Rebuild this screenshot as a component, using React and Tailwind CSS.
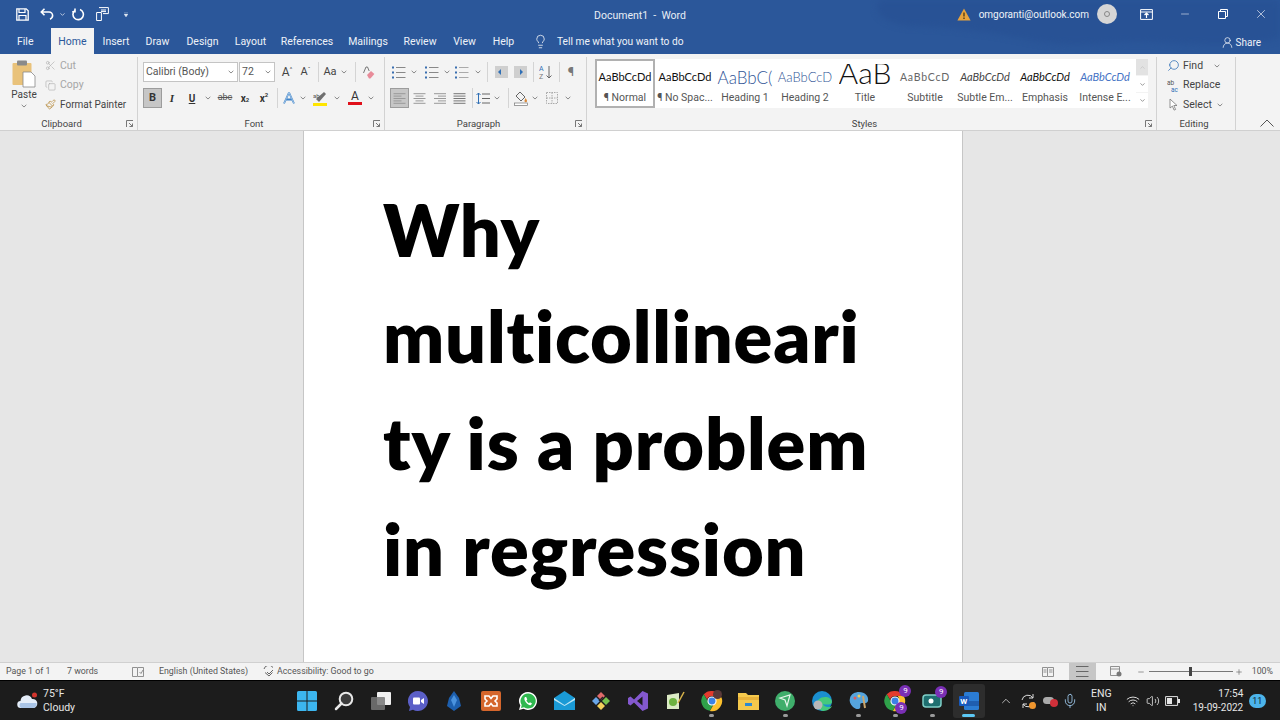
import React from "react";
import { ChevronDown, ChevronUp, Minus, Plus, X, Scissors, Copy, Paintbrush, Lightbulb, UserRound, Search, Mic, Wifi, Volume2 } from "lucide-react";

const tabs = [
  ["Insert", "w-[36px] ml-[4px]"],
  ["Draw", "w-[47px]"],
  ["Design", "w-[43px]"],
  ["Layout", "w-[53px]"],
  ["References", "w-[60px]"],
  ["Mailings", "w-[62px]"],
  ["Review", "w-[42px]"],
  ["View", "w-[47px]"],
  ["Help", "w-[31px]"],
];

const styles = [
  { label: "¶ Normal", text: "AaBbCcDd", cls: "text-[11px] text-[#111]" },
  { label: "¶ No Spac...", text: "AaBbCcDd", cls: "text-[11px] text-[#111]" },
  { label: "Heading 1", text: "AaBbC(", cls: "text-[17px] text-[#2f5496] font-light" },
  { label: "Heading 2", text: "AaBbCcD", cls: "text-[13px] text-[#2f5496] font-light" },
  { label: "Title", text: "AaB", cls: "text-[30px] text-[#111] font-light", clipped: true },
  { label: "Subtitle", text: "AaBbCcD", cls: "text-[10.5px] text-[#666] tracking-[0.8px]" },
  { label: "Subtle Em...", text: "AaBbCcDd", cls: "text-[11px] text-[#444] italic" },
  { label: "Emphasis", text: "AaBbCcDd", cls: "text-[11px] text-[#111] italic" },
  { label: "Intense E...", text: "AaBbCcDd", cls: "text-[11px] text-[#4472c4] italic" },
];

function Chev({ className = "" }) {
  return (
    <svg width="6" height="4" viewBox="0 0 7 4" className={className}>
      <path d="M.8.6l2.7 2.6L6.2.6" fill="none" stroke="#777" strokeWidth="1" />
    </svg>
  );
}

function Cell({ className = "", children }) {
  return <div className={`h-[20px] shrink-0 flex items-center justify-center ${className}`}>{children}</div>;
}

function Divider({ className = "" }) {
  return (
    <div className={`h-[20px] shrink-0 flex justify-center ${className}`}>
      <div className="w-px h-full bg-[#d4d4d4]" />
    </div>
  );
}

function Launcher() {
  return (
    <svg width="8" height="8" viewBox="0 0 8 8" className="absolute right-[3px] top-[63px]">
      <path d="M.5 7V.5H7M3 3l3.5 3.5M6.5 3.5v3h-3" fill="none" stroke="#777" strokeWidth="1" />
    </svg>
  );
}

function Group({ label, className = "", children, launcher = true }) {
  return (
    <section className={`relative h-[73px] mt-[3px] flex flex-col shrink-0 border-r border-[#d2d2d2] ${className}`}>
      <div className="flex-1 min-h-0">{children}</div>
      <div className={`h-[13px] text-center leading-[13px] text-[9.5px] text-[#444] ${launcher ? "pr-[14px]" : "pr-[4px]"}`}>{label}</div>
      {launcher && <Launcher />}
    </section>
  );
}

function Lines({ bullets, color = "#888" }) {
  return (
    <svg width="14" height="13" viewBox="0 0 14 13">
      {[1.5, 6.5, 11.5].map((y) => (
        <g key={y}>
          {bullets && <rect x="0" y={y - 1} width="2" height="2" fill="#3a6fb0" />}
          <path d={`M${bullets ? 4 : 1} ${y}H13.5`} stroke={color} strokeWidth="1" />
        </g>
      ))}
    </svg>
  );
}

function Align({ kind }) {
  const rows = {
    left: [12, 8, 12, 8, 12],
    center: [12, 8, 12, 8, 12],
    right: [12, 8, 12, 8, 12],
    justify: [12, 12, 12, 12, 12],
  }[kind];
  return (
    <svg width="13" height="11" viewBox="0 0 13 11">
      {rows.map((w, i) => {
        const x = kind === "center" ? (13 - w) / 2 : kind === "right" ? 13 - w : 0.5;
        return <path key={i} d={`M${x} ${i * 2.4 + 0.7}h${w}`} stroke={kind === "justify" ? "#777" : "#999"} strokeWidth="1" />;
      })}
    </svg>
  );
}

function TaskIcon({ children, active, dot }) {
  return (
    <div className="relative w-[36.75px] h-[40px] shrink-0 flex items-center justify-center">
      {active && <div className="absolute inset-x-[2px] top-[3px] bottom-[3px] bg-[#2d2d2d] rounded-[3px]" />}
      <div className="relative flex">{children}</div>
      {dot && <div className={`absolute bottom-[4px] h-[3px] rounded-full ${active ? "w-[13px] bg-[#5cc8f5]" : "w-[5px] bg-[#9a9a9a]"}`} />}
    </div>
  );
}

function Badge({ className = "" }) {
  return (
    <div className={`absolute w-[12px] h-[12px] rounded-full bg-[#7a2fb5] text-white text-[8px] leading-[11px] text-center ${className}`}>
      9
    </div>
  );
}

function Chrome({ size = 22 }) {
  return (
    <svg width={size} height={size} viewBox="0 0 24 24">
      <path d="M12 1a11 11 0 0 1 9.5 5.5H12a5.5 5.5 0 0 0-5.3 4L3 4.6A11 11 0 0 1 12 1z" fill="#e33b2e" />
      <path d="M3 4.6l4.7 8.1a5.5 5.5 0 0 0 5.6 3l-3.6 7A11 11 0 0 1 3 4.6z" fill="#2fa14a" />
      <path d="M21.5 6.5a11 11 0 0 1-11.8 16.3l4.8-8.3a5.5 5.5 0 0 0 .3-8z" fill="#fbc02d" />
      <circle cx="12" cy="12" r="4.4" fill="#3b82e6" stroke="#fff" strokeWidth="1.2" />
    </svg>
  );
}

export default function App() {
  return (
    <div className="w-[1280px] h-[720px] overflow-hidden flex flex-col font-['Roboto',sans-serif] text-[10.5px] text-[#444]">
      {/* title bar */}
      <header className="relative h-[54px] shrink-0 bg-[#2b579a] text-white overflow-hidden">
        <svg className="absolute left-[870px] top-0 blur-[3px]" width="410" height="54" viewBox="0 0 410 54">
          <path d="M10 0h400v38c-40 10-90 6-130 4s-70 8-120-2S90 28 40 26C20 25 0 14 10 0z" fill="#285295" />
        </svg>
        <div className="relative h-[28px] flex items-center">
          <div className="w-[15px] ml-[16px] flex">
            <svg width="13" height="13" viewBox="0 0 13 13">
              <path d="M.8.8h9.4l2 2v9.400H.8z" fill="none" stroke="#fff" strokeWidth="1.3" />
              <path d="M3 1v3.500h6V1M3 12V7.500h7V12" fill="none" stroke="#fff" strokeWidth="1.2" />
            </svg>
          </div>
          <svg className="ml-[9px]" width="14" height="12" viewBox="0 0 14 12">
            <path d="M4.500.8L1.300 4l3.200 3.200M1.600 4H9a3.600 3.600 0 0 1 3.600 3.600c0 2-1.200 3-2.600 3.600" fill="none" stroke="#fff" strokeWidth="1.6" />
          </svg>
          <ChevronDown className="ml-[5px] text-[#c8d4e6]" size={7} strokeWidth={3} />
          <svg className="ml-[6px]" width="13" height="13" viewBox="0 0 13 13">
            <path d="M8 1.600a5.200 5.200 0 1 1-4.800.6M3 .5v3.200H.2" fill="none" stroke="#fff" strokeWidth="1.6" />
          </svg>
          <svg className="ml-[11px]" width="13" height="14" viewBox="0 0 13 14">
            <path d="M.6 5.500h4.800v8H.6zM3 .6h9.400v6H7" fill="none" stroke="#fff" strokeWidth="1" />
            <path d="M5 3h5M5 4.600h5" stroke="#fff" strokeWidth="1" />
          </svg>
          <svg className="ml-[15px]" width="4" height="5" viewBox="0 0 5 6">
            <path d="M0 0h5M0 2.500h5L2.500 6z" fill="#dfe6f1" stroke="#dfe6f1" strokeWidth=".5" />
          </svg>
          <div className="flex-1" />
          <div className="absolute left-0 right-0 pt-[3px] text-center text-[10.5px] text-[#e8edf5] pointer-events-none">Document1&nbsp; -&nbsp; Word</div>
          <svg width="14" height="13" viewBox="0 0 14 13">
            <path d="M7 .5l6.600 12H.4z" fill="#e8a33d" />
            <path d="M7 4.500v4M7 9.600v1.400" stroke="#3b2c10" strokeWidth="1.2" />
          </svg>
          <span className="ml-[8px] text-[10px] text-[#eef2f8]">omgoranti@outlook.com</span>
          <div className="ml-[8px] w-[20px] h-[20px] rounded-full bg-[#d6d6d6] flex items-center justify-center">
            <div className="w-[6px] h-[6px] rounded-full border border-[#888]" />
          </div>
          <svg className="ml-[22.5px]" width="13" height="11" viewBox="0 0 13 11">
            <path d="M.6.6h11.800v9.800H.6zM.6 3h11.800" fill="none" stroke="#fff" strokeWidth="1" />
            <path d="M6.500 4v5M4.500 6l2-2 2 2" fill="none" stroke="#fff" strokeWidth="1.2" />
          </svg>
          <Minus className="ml-[26.5px] text-[#e8edf5]" size={12} strokeWidth={1.2} />
          <svg className="ml-[27px]" width="10" height="10" viewBox="0 0 10 10">
            <path d="M.5 2.500h7v7h-7zM2.500 2.500v-2h7v7h-2" fill="none" stroke="#fff" strokeWidth="1" />
          </svg>
          <X className="ml-[26px] mr-[12px] text-[#e8edf5]" size={14} strokeWidth={1.2} />
        </div>
        <nav className="relative h-[26px] flex items-center text-[10.5px] text-[#eef2f8]">
          <span className="ml-[17px] w-[17px] pt-[1px]">File</span>
          <div className="ml-[17px] w-[43px] h-[26px] pt-[2px] bg-[#f3f3f3] text-[#2b579a] flex items-center justify-center">Home</div>
          {tabs.map(([name, cls]) => (
            <span key={name} className={`${cls} pt-[2px] text-center whitespace-nowrap`}>{name}</span>
          ))}
          <Lightbulb className="ml-[14px] text-white" size={15} strokeWidth={1.2} />
          <span className="ml-[9px] pt-[1px] text-[10.2px]">Tell me what you want to do</span>
          <div className="flex-1" />
          <UserRound className="mt-[2px] text-white" size={13} strokeWidth={1.3} />
          <span className="ml-[2px] mr-[19px] pt-[2px] text-[10px]">Share</span>
        </nav>
      </header>

      {/* ribbon */}
      <div className="h-[77px] shrink-0 bg-[#f3f3f3] border-b border-[#d0d0d0] flex">
        <Group label="Clipboard" className="w-[138px]">
          <div className="flex h-full">
            <div className="w-[48px] -mr-[3px] flex flex-col items-center pt-[3px]">
              <svg width="24" height="28" viewBox="0 0 24 28">
                <rect x="0.5" y="3" width="19" height="22" rx="1" fill="#e9c27a" />
                <rect x="5" y="0.5" width="10" height="5" rx="1" fill="#8a8a8a" />
                <path d="M11 12h8l4 4v11H11z" fill="#fff" stroke="#888" strokeWidth=".8" />
              </svg>
              <span className="leading-[12px] mt-px text-[10px]">Paste</span>
              <Chev className="mt-[3px]" />
            </div>
            <div className="flex flex-col gap-[2.500px] text-[10.5px]">
              <div className="h-[17px] flex items-center gap-[4px] text-[#a6a6a6]">
                <Scissors size={11} strokeWidth={1.2} className="w-[11px]" /> Cut
              </div>
              <div className="h-[17px] flex items-center gap-[4px] text-[#a6a6a6]">
                <Copy size={11} strokeWidth={1.2} className="w-[11px]" /> Copy
              </div>
              <div className="h-[17px] flex items-center gap-[4px] whitespace-nowrap text-[10px] text-[#444]">
                <Paintbrush size={11} strokeWidth={1.6} className="w-[11px] text-[#b78a3c]" /> Format Painter
              </div>
            </div>
          </div>
        </Group>

        <Group label="Font" className="w-[247px]">
          <div className="pl-[5px] pt-[5px] flex flex-col gap-[6px]">
            <div className="flex items-center h-[20px]">
              <div className="w-[95px] h-[20px] bg-white border border-[#c4c4c4] flex items-center justify-between pl-[2px] pr-[3px] text-[#555]">
                Calibri (Body) <Chev />
              </div>
              <div className="ml-px w-[36px] h-[20px] bg-white border border-[#c4c4c4] flex items-center justify-between pl-[2px] pr-[3px] text-[#555]">
                72 <Chev />
              </div>
              <Cell className="w-[18px] ml-[3px] text-[12px]">A<sup className="text-[6px]">^</sup></Cell>
              <Cell className="w-[19px] text-[11px]">A<sup className="text-[6px]">ˇ</sup></Cell>
              <Divider className="w-[6px]" />
              <Cell className="w-[18px] text-[11px]">Aa</Cell>
              <Cell className="w-[10px]"><Chev /></Cell>
              <Divider className="w-[12px]" />
              <Cell className="w-[14px]">
                <svg width="13" height="13" viewBox="0 0 13 13">
                  <path d="M1.500 7L4 1h1.500l1.700 4" fill="none" stroke="#777" strokeWidth="1" />
                  <path d="M5 9l4-4 3.400 3-4 4.400H7z" fill="#e88c9a" />
                </svg>
              </Cell>
            </div>
            <div className="flex items-center h-[20px]">
              <Cell className="w-[19px] bg-[#c6c6c6] border border-[#9c9c9c] font-bold text-[11px] text-[#333]">B</Cell>
              <Cell className="w-[20px] italic font-bold text-[11px] font-['Liberation_Serif',serif] text-[#333]">I</Cell>
              <Cell className="w-[20px] underline font-bold text-[10px] text-[#333]">U</Cell>
              <Cell className="w-[12px]"><Chev /></Cell>
              <Cell className="w-[22px] line-through text-[9px] text-[#555]">abc</Cell>
              <Cell className="w-[18px] font-bold text-[10px] text-[#333]">x<sub className="text-[6px]">2</sub></Cell>
              <Cell className="w-[20px] font-bold text-[10px] text-[#333]">x<sup className="text-[6px]">2</sup></Cell>
              <Divider className="w-[6px]" />
              <Cell className="w-[18px]">
                <svg width="14" height="14" viewBox="0 0 14 14">
                  <path d="M7 1.500L2 12.500M7 1.500l5 11M4 8.500h6" fill="none" stroke="#3e83c9" strokeWidth="1.8" />
                  <path d="M7 1.500L2 12.500M7 1.500l5 11" fill="none" stroke="#dcebf8" strokeWidth=".6" />
                </svg>
              </Cell>
              <Cell className="w-[10px]"><Chev /></Cell>
              <Cell className="w-[24px]">
                <svg width="15" height="15" viewBox="0 0 15 15">
                  <path d="M3 8l8-7 2 2-7 8z" fill="#6f6f6f" />
                  <text x="0" y="7" fontSize="6" fill="#555">ab</text>
                  <rect x="0" y="12" width="14" height="3" fill="#ffe500" />
                </svg>
              </Cell>
              <Cell className="w-[10px]"><Chev /></Cell>
              <Cell className="w-[26px]">
                <div className="flex flex-col items-center leading-[11px] text-[12px] text-[#333]">
                  A
                  <div className="w-[14px] h-[3px] bg-[#e0101a]" />
                </div>
              </Cell>
              <Cell className="w-[6px]"><Chev /></Cell>
            </div>
          </div>
        </Group>

        <Group label="Paragraph" className="w-[202px]">
          <div className="pl-[5px] pt-[5px] flex flex-col gap-[6px]">
            <div className="flex items-center h-[20px]">
              <Cell className="w-[18px]"><Lines bullets /></Cell>
              <Cell className="w-[12px]"><Chev /></Cell>
              <Cell className="w-[24px]"><Lines bullets /></Cell>
              <Cell className="w-[6px]"><Chev /></Cell>
              <Cell className="w-[24px]"><Lines bullets color="#aaa" /></Cell>
              <Cell className="w-[8px]"><Chev /></Cell>
              <Divider className="w-[10px]" />
              <Cell className="w-[18px]">
                <svg width="14" height="12" viewBox="0 0 14 12">
                  <rect x="1" y="0" width="13" height="12" fill="#cfcfcf" />
                  <path d="M7 3L4 6l3 3z" fill="#2f6fb5" />
                </svg>
              </Cell>
              <Cell className="w-[22px]">
                <svg width="14" height="12" viewBox="0 0 14 12">
                  <rect x="0" y="0" width="13" height="12" fill="#cfcfcf" />
                  <path d="M6 3l3 3-3 3z" fill="#2f6fb5" />
                </svg>
              </Cell>
              <Divider className="w-[2px]" />
              <Cell className="w-[24px]">
                <svg width="14" height="14" viewBox="0 0 14 14">
                  <text x="0" y="6" fontSize="7" fill="#2f6fb5">A</text>
                  <text x="0" y="13.500" fontSize="7" fill="#777">Z</text>
                  <path d="M10 1v12M7.500 10.500L10 13l2.500-2.500" fill="none" stroke="#666" />
                </svg>
              </Cell>
              <Divider className="w-[2px]" />
              <Cell className="w-[22px] text-[13px] text-[#777]">¶</Cell>
            </div>
            <div className="flex items-center h-[20px]">
              <Cell className="w-[19px] bg-[#c6c6c6] border border-[#9c9c9c]"><Align kind="left" /></Cell>
              <Cell className="w-[20px]"><Align kind="center" /></Cell>
              <Cell className="w-[20px]"><Align kind="right" /></Cell>
              <Cell className="w-[20px]"><Align kind="justify" /></Cell>
              <Divider className="w-[6px]" />
              <Cell className="w-[16px]">
                <svg width="14" height="13" viewBox="0 0 14 13">
                  <path d="M2.500 1v11M.5 3l2-2 2 2M.5 10l2 2 2-2" fill="none" stroke="#2f6fb5" />
                  <path d="M6 2h8M6 6.500h8M6 11h8" stroke="#666" />
                </svg>
              </Cell>
              <Cell className="w-[12px]"><Chev /></Cell>
              <Divider className="w-[10px]" />
              <Cell className="w-[16px]">
                <svg width="14" height="15" viewBox="0 0 14 15">
                  <path d="M6 1l5 5-4 4-5-5z" fill="none" stroke="#666" />
                  <path d="M11.500 7c1 1.500 1.500 2 1.500 3a1.200 1.200 0 0 1-2.500 0c0-1 .5-1.500 1-3z" fill="#d98a3c" />
                  <rect x="0.5" y="12" width="13" height="2.500" fill="#fff" stroke="#777" strokeWidth=".7" />
                </svg>
              </Cell>
              <Cell className="w-[12px]"><Chev /></Cell>
              <Cell className="w-[22px]">
                <svg width="12" height="12" viewBox="0 0 12 12">
                  <path d="M.5.5h11v11H.5zM6 .5v11M.5 6h11" fill="none" stroke="#aaa" strokeDasharray="1.500 1" />
                </svg>
              </Cell>
              <Cell className="w-[10px]"><Chev /></Cell>
            </div>
          </div>
        </Group>

        <Group label="Styles" className="w-[570px]">
          <div className="pt-[2px] pl-[8px] flex">
            <div className="w-[541px] h-[49px] bg-white flex items-stretch">
              {styles.map((s, i) => (
                <div key={s.label} className={`w-[60px] shrink-0 flex flex-col items-center overflow-hidden ${i === 0 ? "border-2 border-[#b1b1b1] pt-[3px]" : "pt-[5px]"}`}>
                  {s.clipped ? (
                    <div className="h-[27px] w-full flex justify-center">
                      <div className={`h-[20px] overflow-hidden leading-[16px] font-['Lato',sans-serif] whitespace-nowrap ${s.cls}`}>{s.text}</div>
                    </div>
                  ) : (
                    <div className={`h-[27px] w-full flex items-center justify-center whitespace-nowrap overflow-hidden font-['Lato',sans-serif] ${s.cls}`}>{s.text}</div>
                  )}
                  <div className="text-[10.5px] leading-[14px] text-[#555] whitespace-nowrap">{s.label}</div>
                </div>
              ))}
            </div>
            <div className="w-[12px] h-[49px] flex flex-col gap-px bg-[#f3f3f3]">
              <div className="h-[16px] bg-[#e2e2e2] flex items-center justify-center"><ChevronUp size={7} className="text-[#bbb]" /></div>
              <div className="h-[16px] bg-white flex items-center justify-center"><ChevronDown size={7} className="text-[#555]" /></div>
              <div className="h-[15px] bg-white flex items-center justify-center"><ChevronDown size={7} className="text-[#555]" /></div>
            </div>
          </div>
        </Group>

        <Group label="Editing" className="w-[79px]" launcher={false}>
          <div className="pl-[10px] flex flex-col gap-[2.500px]">
            <div className="h-[17px] flex items-center gap-[3px] text-[#444]">
              <Search size={13} strokeWidth={1.4} className="text-[#2f6fb5] -scale-x-100" />
              Find <Chev className="ml-[8px]" />
            </div>
            <div className="h-[17px] flex items-center gap-[3px] text-[#444]">
              <svg width="13" height="13" viewBox="0 0 13 13">
                <text x="0" y="6" fontSize="6.500" fill="#555">ab</text>
                <text x="4" y="12.500" fontSize="6.500" fill="#2f6fb5">ac</text>
              </svg>
              Replace
            </div>
            <div className="h-[17px] flex items-center gap-[3px] text-[#444]">
              <svg width="13" height="13" viewBox="0 0 13 13">
                <path d="M3 1l7 6.500H6.800l1.800 4-1.500.6-1.700-4L3 10z" fill="#fff" stroke="#777" strokeWidth=".8" />
              </svg>
              Select <Chev className="ml-[2px]" />
            </div>
          </div>
        </Group>
        <div className="flex-1 flex items-end justify-end pr-[6px] pb-[3px]">
          <svg width="14" height="8" viewBox="0 0 14 8">
            <path d="M.5 7.500L7 1l6.500 6.500" fill="none" stroke="#555" strokeWidth="1" />
          </svg>
        </div>
      </div>

      {/* document */}
      <main className="flex-1 min-h-0 bg-[#e6e6e6] overflow-hidden pl-[303px]">
        <div className="w-[660px] h-full bg-white border-x border-[#c6c6c6] pl-[79px] pt-[45px] font-['Lato',sans-serif] font-extrabold text-[72px] tracking-[0.8px] leading-[106.300px] text-black whitespace-nowrap">
          <div>Why</div>
          <div>multicollineari</div>
          <div>ty is a problem</div>
          <div>in regression</div>
        </div>
      </main>

      {/* status bar */}
      <footer className="h-[18px] shrink-0 bg-[#f3f3f3] flex items-center text-[8.8px] text-[#555] border-t border-[#d0d0d0]">
        <span className="ml-[6px] w-[61px]">Page 1 of 1</span>
        <span className="w-[65px]">7 words</span>
        <svg width="12" height="10" viewBox="0 0 12 10">
          <path d="M.5.5h5v9h-5zM6 .5h5.500v9H6M7.500 5l1.500 1.500 2-3.500" fill="none" stroke="#777" strokeWidth=".8" />
        </svg>
        <span className="ml-[15px] w-[103px]">English (United States)</span>
        <svg width="14" height="11" viewBox="0 0 14 11">
          <path d="M7 10L3 6.500M11 1.500A5 5 0 0 0 2 3M7 10l3.500-3.500M5 6l2 2 4-4" fill="none" stroke="#555" strokeWidth=".9" />
        </svg>
        <span className="ml-px">Accessibility: Good to go</span>
        <div className="flex-1" />
        <svg width="12" height="10" viewBox="0 0 12 10">
          <path d="M.5.5h5v9h-5zM6 .5h5.500v9H6M1.500 3h3M1.500 5h3M7 3h3.500M7 5h3.500" fill="none" stroke="#777" strokeWidth=".8" />
        </svg>
        <div className="ml-[15px] w-[27px] h-[18px] bg-[#c6c6c6] flex items-center justify-center"><Lines color="#666" /></div>
        <svg className="ml-[14px]" width="12" height="11" viewBox="0 0 12 11">
          <path d="M.5.5h9v9h-9zM.5 3h9" fill="none" stroke="#777" strokeWidth=".8" />
          <circle cx="9" cy="8" r="2.500" fill="#777" />
        </svg>
        <Minus size={8} className="ml-[15px] text-[#666]" />
        <div className="relative ml-[4px] w-[84px] h-px bg-[#777]">
          <div className="absolute left-[40px] -top-[4px] w-[3px] h-[9px] bg-[#444]" />
        </div>
        <Plus size={8} className="ml-[2px] text-[#666]" />
        <span className="ml-[9px] mr-[7px]">100%</span>
      </footer>

      {/* taskbar */}
      <div className="h-[40px] shrink-0 bg-[#1c1c1c] border-t border-black flex items-center text-white text-[10.5px]">
        <svg className="ml-[17px]" width="21" height="17" viewBox="0 0 21 17">
          <path d="M4 16a3.500 3.500 0 0 1-.5-7A6 6 0 0 1 15 7a4.500 4.500 0 0 1 1.500 9z" fill="#e4edf8" />
          <path d="M4 16a3.500 3.500 0 0 1-.5-5h16a4.500 4.500 0 0 1-3 5z" fill="#a9c4e6" />
          <circle cx="17.500" cy="3" r="2.500" fill="#d3352e" />
        </svg>
        <div className="ml-[5px] w-[246px] leading-[14px] text-[#e6e6e6]">
          <div>75°F</div>
          <div>Cloudy</div>
        </div>
        <div className="flex items-center">
          <TaskIcon>
            <svg width="20" height="20" viewBox="0 0 20 20">
              <path d="M0 1.500A1.500 1.500 0 0 1 1.500 0h8v9.500H0zM10.500 0h8A1.500 1.500 0 0 1 20 1.500v8h-9.500zM0 10.500h9.500V20h-8A1.500 1.500 0 0 1 0 18.500zM10.500 10.500H20v8a1.500 1.500 0 0 1-1.500 1.500h-8z" fill="#3cb6ef" />
            </svg>
          </TaskIcon>
          <TaskIcon>
            <svg width="20" height="20" viewBox="0 0 20 20">
              <circle cx="12" cy="8" r="6.300" fill="#3c3c3c" stroke="#e8e8e8" strokeWidth="2" />
              <path d="M7.500 12.500L2 18" stroke="#e8e8e8" strokeWidth="2.500" strokeLinecap="round" />
            </svg>
          </TaskIcon>
          <TaskIcon>
            <svg width="20" height="18" viewBox="0 0 20 18">
              <rect x="6" y="0" width="14" height="13" rx="1" fill="#f0f0f0" />
              <rect x="0" y="5" width="14" height="13" rx="1" fill="#777" fillOpacity=".85" />
            </svg>
          </TaskIcon>
          <TaskIcon>
            <svg width="20" height="20" viewBox="0 0 20 20">
              <path d="M10 0a10 10 0 1 1-5 18.700L1 20l1-4A10 10 0 0 1 10 0z" fill="#5b5fc7" />
              <rect x="5" y="6.500" width="7" height="7" rx="1" fill="#fff" />
              <path d="M13 9l3-2v6l-3-2z" fill="#fff" />
            </svg>
          </TaskIcon>
          <TaskIcon>
            <svg width="14" height="20" viewBox="0 0 14 20">
              <path d="M7 0l5 7 2 8-7 5-7-5 2-8z" fill="#1d5fae" />
              <path d="M7 4l3 5-3 7-3-7z" fill="#4b93de" />
            </svg>
          </TaskIcon>
          <TaskIcon>
            <svg width="20" height="20" viewBox="0 0 20 20">
              <rect width="20" height="20" rx="2" fill="#d5662c" />
              <path d="M4 5h4l2 2.500L12 5h4v3l-2 2 2 2v3h-4l-2-2.500L8 15H4v-3l2-2-2-2z" fill="none" stroke="#fff" strokeWidth="1.600" />
            </svg>
          </TaskIcon>
          <TaskIcon>
            <svg width="20" height="20" viewBox="0 0 20 20">
              <path d="M10 1a9 9 0 0 0-7.700 13.600L1 19l4.500-1.200A9 9 0 1 0 10 1z" fill="#fff" />
              <path d="M10 2.500a7.500 7.500 0 0 0-6.300 11.500L3 17l3-.8A7.500 7.500 0 1 0 10 2.500z" fill="#2fb84f" />
              <path d="M7 6c-1 1-1 3 1 5.500s4 3 5 2.500l1-1.500-2-1.200-1 .9c-1-.4-2.200-1.700-2.600-2.700l.9-1L8.200 6z" fill="#fff" />
            </svg>
          </TaskIcon>
          <TaskIcon>
            <svg width="21" height="19" viewBox="0 0 21 19">
              <path d="M0 7l10.500-7L21 7v12H0z" fill="#1a9ad6" />
              <path d="M0 7l10.500 7L21 7v2l-10.500 6L0 9z" fill="#bfe6f6" />
            </svg>
          </TaskIcon>
          <TaskIcon>
            <svg width="20" height="20" viewBox="0 0 20 20">
              <path d="M10 1l4 4-4 4-4-4z" fill="#df6a6a" />
              <path d="M5 6l4 4-4 4-4-4z" fill="#6aa6e8" />
              <path d="M15 6l4 4-4 4-4-4z" fill="#76c24f" />
              <path d="M10 11l4 4-4 4-4-4z" fill="#f1cf5b" />
              <path d="M8 10l4-4" stroke="#222" strokeWidth="1.500" />
            </svg>
          </TaskIcon>
          <TaskIcon>
            <svg width="20" height="20" viewBox="0 0 20 20">
              <path d="M14.500 0L20 2.500v15L14.500 20 6 11.500 2.500 14.500 0 13V7l2.500-1.500L6 8.500z" fill="#8458cf" />
              <path d="M14.500 5.500L9 10l5.500 4.500z" fill="#1c1c1c" />
            </svg>
          </TaskIcon>
          <TaskIcon>
            <svg width="20" height="20" viewBox="0 0 20 20">
              <path d="M2 4l12-2v16H2z" fill="#dcebc5" />
              <circle cx="8" cy="11" r="4" fill="#6db33f" />
              <path d="M13 12L19 1" stroke="#d9b44a" strokeWidth="1.500" />
            </svg>
          </TaskIcon>
          <TaskIcon dot>
            <Chrome />
            <div className="absolute right-[1px] top-0 w-[9px] h-[9px] rounded-full bg-[#5a3a3a]" />
          </TaskIcon>
          <TaskIcon>
            <svg width="21" height="18" viewBox="0 0 21 18">
              <path d="M0 1h8l2 2h11v15H0z" fill="#f5c94c" />
              <rect x="0" y="5" width="21" height="3" fill="#e8b23a" />
              <rect x="7" y="11" width="7" height="3" fill="#2f8ad0" />
            </svg>
          </TaskIcon>
          <TaskIcon dot>
            <svg width="20" height="20" viewBox="0 0 20 20">
              <circle cx="10" cy="10" r="10" fill="#3fae6b" />
              <path d="M5 7l10-3-3 11-2-6z" fill="none" stroke="#e6f5ec" strokeWidth="1.200" />
            </svg>
          </TaskIcon>
          <TaskIcon>
            <svg width="20" height="20" viewBox="0 0 20 20">
              <circle cx="10" cy="10" r="10" fill="#1a8fd0" />
              <path d="M20 11c0-3-3-5-7-5-5 0-8 3-8 7 0 3 2 6 6 7 5 0 8-3 9-5-3 2-8 1-9-2 3 1 9 1 9-2z" fill="#45c97c" />
              <circle cx="6" cy="14" r="4.500" fill="#b8b8b8" />
            </svg>
          </TaskIcon>
          <TaskIcon dot>
            <svg width="20" height="20" viewBox="0 0 20 20">
              <path d="M10 1c6 0 10 4 9 9-1 3-4 2-6 2-3 0-1 3-2 5-1 2-5 1-7-1-3-3-4-6-3-9 1-4 5-6 9-6z" fill="#55a4dd" />
              <circle cx="6" cy="7" r="1.500" fill="#e25c5c" />
              <circle cx="10" cy="5" r="1.500" fill="#f1cf5b" />
              <path d="M14 5l2 12" stroke="#c9a56c" strokeWidth="2" />
            </svg>
          </TaskIcon>
          <TaskIcon dot>
            <Chrome />
            <Badge className="-right-[5px] -top-[5px]" />
            <Badge className="-right-[1px] -bottom-[2px]" />
          </TaskIcon>
          <TaskIcon dot>
            <svg width="20" height="14" viewBox="0 0 20 14">
              <rect x="1" y="1" width="18" height="12" rx="3" fill="#1f6f70" stroke="#7fd0c8" strokeWidth="1.500" />
              <circle cx="9" cy="7" r="2.500" fill="#fff" />
            </svg>
            <Badge className="-right-[5px] -top-[8px]" />
          </TaskIcon>
          <TaskIcon active dot>
            <svg width="20" height="18" viewBox="0 0 20 18">
              <rect x="5" y="0" width="15" height="18" rx="1.500" fill="#2b7cd3" />
              <rect x="5" y="9" width="15" height="5" fill="#1f5eb0" />
              <rect x="0" y="4" width="10" height="10" rx="1" fill="#185abd" />
              <text x="1.300" y="12" fontSize="8" fontWeight="700" fill="#fff">W</text>
            </svg>
          </TaskIcon>
        </div>
        <ChevronUp size={14} strokeWidth={1.3} className="ml-[12px] text-[#e0e0e0]" />
        <div className="relative ml-[7px] w-[16px] h-[16px]">
          <svg width="16" height="16" viewBox="0 0 16 16">
            <path d="M2 7a6 6 0 0 1 11-2M14 9a6 6 0 0 1-11 2M13 1v4H9M3 15v-4h4" fill="none" stroke="#ddd" strokeWidth="1" />
          </svg>
          <div className="absolute right-0 bottom-0 w-[7px] h-[7px] rounded-full bg-[#f0962e]" />
        </div>
        <div className="relative ml-[7px] w-[15px] h-[12px]">
          <div className="absolute left-0 top-[2px] w-[11px] h-[7px] rounded-full bg-[#aaa]" />
          <div className="absolute right-0 bottom-0 w-[8px] h-[8px] rounded-full bg-[#d0303a]" />
        </div>
        <Mic size={16} strokeWidth={1.3} className="ml-[4px] text-[#9cc7ea]" />
        <div className="ml-[12px] w-[22px] text-center leading-[14px] text-[#e6e6e6]">ENG<br />IN</div>
        <Wifi size={14} strokeWidth={1.6} className="ml-[14px] text-[#e6e6e6]" />
        <Volume2 size={14} strokeWidth={1.4} className="ml-[6px] text-[#e6e6e6]" />
        <svg className="ml-[5px]" width="15" height="10" viewBox="0 0 15 10">
          <path d="M.6.6h12v8.800H.6z" fill="none" stroke="#e6e6e6" />
          <rect x="2" y="2" width="5" height="6" fill="#e6e6e6" />
          <rect x="13" y="3" width="2" height="4" fill="#e6e6e6" />
        </svg>
        <div className="ml-[5px] w-[58px] text-right text-[10px] leading-[14px] text-[#e6e6e6] whitespace-nowrap">
          17:54<br />19-09-2022
        </div>
        <div className="ml-[5.5px] w-[17px] h-[14px] rounded-full bg-[#4cb4ea] text-[#123] text-[9px] leading-[14px] text-center">11</div>
      </div>
    </div>
  );
}
